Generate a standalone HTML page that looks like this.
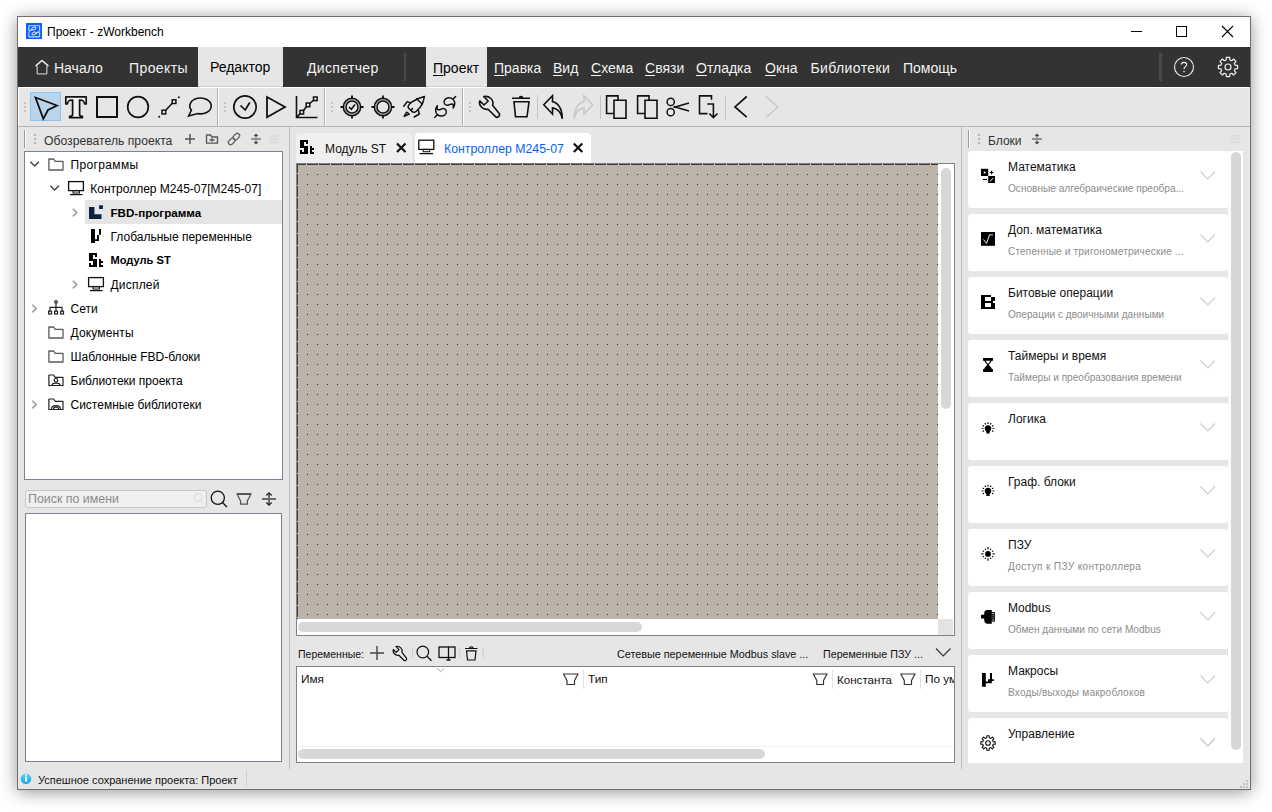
<!DOCTYPE html>
<html><head><meta charset="utf-8">
<style>
*{box-sizing:border-box;margin:0;padding:0}
html,body{width:1272px;height:812px;overflow:hidden;background:#fff;font-family:"Liberation Sans",sans-serif;}
.a{position:absolute}
.t{position:absolute;white-space:nowrap;line-height:1}
svg{position:absolute;overflow:visible}
#win{position:absolute;left:17px;top:16px;width:1234px;height:774px;border:1px solid #6f6f6f;background:#e6e6e6;box-shadow:0 2px 16px rgba(0,0,0,.42)}
.mb{color:#f2f2f2;font-size:14px}
.mb u{text-decoration:underline;text-underline-offset:2px;text-decoration-thickness:1px}
.sep{position:absolute;width:2px;background:#b0b0b0;border-right:1px solid #fff}
.card{position:absolute;left:968px;width:260px;height:57px;background:#fff;border-radius:3px}
.ct{position:absolute;left:40px;top:10px;font-size:12px;color:#111;white-space:nowrap;line-height:1}
.cs{position:absolute;left:40px;top:32.5px;font-size:10.1px;color:#8c8c8c;white-space:nowrap;line-height:1}
.chev{position:absolute;left:232px;top:20px}
.tree{font-size:12px;color:#000}
</style></head><body>
<div id="win"></div>

<!-- TITLE BAR -->
<div class="a" style="left:18px;top:17px;width:1232px;height:30px;background:#fff"></div>
<svg style="left:0;top:0" width="60" height="50">
 <rect x="26" y="23" width="16" height="16" fill="#0b5ffd"/>
 <path d="M28.8 30.2 V26.3 Q28.8 25.7 29.4 25.7 H39 Q39.6 25.7 39.6 26.3 V30.8 M39.6 32.6 V36.3 Q39.6 36.9 39 36.9 H29.4 Q28.8 36.9 28.8 36.3 V32" fill="none" stroke="#c4d8ff" stroke-width="1.1"/>
 <path d="M28.6 31.3 L32.3 29.4 M39.8 31.6 L35.9 33.2" stroke="#c4d8ff" stroke-width="1.6"/>
 <ellipse cx="33.9" cy="28.4" rx="2.1" ry="1.3" transform="rotate(-18 33.9 28.4)" fill="none" stroke="#c4d8ff" stroke-width="1.1"/>
 <ellipse cx="34" cy="33.4" rx="2.1" ry="1.3" transform="rotate(-18 34 33.4)" fill="none" stroke="#c4d8ff" stroke-width="1.1"/>
</svg>
<div class="t" style="left:47px;top:26px;font-size:12px;color:#000">Проект - zWorkbench</div>
<svg style="left:1131px;top:31px" width="11" height="1"><rect width="11" height="1" fill="#000"/></svg>
<svg style="left:1176px;top:26px" width="11" height="11"><rect x=".5" y=".5" width="10" height="10" fill="none" stroke="#000"/></svg>
<svg style="left:1222px;top:26px" width="11" height="11"><path d="M0 0L11 11M11 0L0 11" stroke="#000" stroke-width="1.1"/></svg>

<!-- MENU BAR -->
<div class="a" style="left:18px;top:47px;width:1232px;height:40px;background:#333"></div>
<div class="a" style="left:198px;top:47px;width:85px;height:40px;background:#e6e6e6;border-bottom:1px solid #cfcfcf"></div>
<div class="a" style="left:426px;top:47px;width:61px;height:40px;background:#e6e6e6;border-bottom:1px solid #cfcfcf"></div>
<svg style="left:0;top:0" width="60" height="90"><path d="M37.2 73.8 V66.4 L35.8 65.7 L42 60.5 L48.2 65.7 L46.8 66.4 V73.8 Z" fill="none" stroke="#b8b8b8" stroke-width="1.3" stroke-linejoin="round"/><path d="M35.8 65.7 L42 60.5 L48.2 65.7" fill="none" stroke="#e6e6e6" stroke-width="1.3" stroke-linejoin="round"/></svg>
<div class="t mb" style="left:54px;top:61px">Начало</div>
<div class="t mb" style="left:129px;top:61px;letter-spacing:.4px">Проекты</div>
<div class="t mb" style="left:210px;top:60px;color:#000">Редактор</div>
<div class="t mb" style="left:307px;top:61px;letter-spacing:.35px">Диспетчер</div>
<div class="a" style="left:404px;top:53px;width:2px;height:28px;background:#4b4b4b"></div>
<div class="t mb" style="left:433px;top:61px;color:#000"><u>П</u>роект</div>
<div class="t mb" style="left:494px;top:61px"><u>П</u>равка</div>
<div class="t mb" style="left:553px;top:61px"><u>В</u>ид</div>
<div class="t mb" style="left:591px;top:61px"><u>С</u>хема</div>
<div class="t mb" style="left:645px;top:61px"><u>С</u>вязи</div>
<div class="t mb" style="left:696px;top:61px"><u>О</u>тладка</div>
<div class="t mb" style="left:765px;top:61px"><u>О</u>кна</div>
<div class="t mb" style="left:810.5px;top:61px;letter-spacing:.38px">Библиотеки</div>
<div class="t mb" style="left:903px;top:61px">Помощь</div>
<div class="a" style="left:1159px;top:53px;width:3px;height:28px;background:#4a4a4a"></div>
<svg style="left:1174px;top:57px" width="20" height="20" viewBox="0 0 20 20"><circle cx="10" cy="10" r="9.5" fill="none" stroke="#f0f0f0" stroke-width="1.1"/><path d="M7.3 7.6 C7.3 4.6 12.7 4.6 12.7 7.6 C12.7 9.6 10 9.8 10 12" fill="none" stroke="#f0f0f0" stroke-width="1.1"/><circle cx="10" cy="14.6" r=".8" fill="#f0f0f0"/></svg>
<svg style="left:0;top:0" width="1272" height="90"><path d="M1226.29 57.45 L1229.71 57.45 L1229.84 59.94 L1231.69 60.70 L1233.55 59.04 L1235.96 61.45 L1234.30 63.31 L1235.06 65.16 L1237.55 65.29 L1237.55 68.71 L1235.06 68.84 L1234.30 70.69 L1235.96 72.55 L1233.55 74.96 L1231.69 73.30 L1229.84 74.06 L1229.71 76.55 L1226.29 76.55 L1226.16 74.06 L1224.31 73.30 L1222.45 74.96 L1220.04 72.55 L1221.70 70.69 L1220.94 68.84 L1218.45 68.71 L1218.45 65.29 L1220.94 65.16 L1221.70 63.31 L1220.04 61.45 L1222.45 59.04 L1224.31 60.70 L1226.16 59.94 Z" fill="none" stroke="#f0f0f0" stroke-width="1.2" stroke-linejoin="round"/><circle cx="1228" cy="67" r="3" fill="none" stroke="#f0f0f0" stroke-width="1.2"/></svg>

<!-- TOOLBAR -->
<div class="a" style="left:18px;top:87px;width:1232px;height:1px;background:#fff"></div><div class="a" style="left:18px;top:87px;width:1px;height:39px;background:#fff"></div>
<div class="a" style="left:18px;top:126px;width:1232px;height:1px;background:#b4b4b4"></div>


<!-- TOOLBAR ICONS -->
<div class="a" style="left:30px;top:92px;width:31px;height:29px;background:#bad4ea;border:1px solid #8fc2ee"></div>
<div class="sep" style="left:217px;top:88px;height:38px"></div>
<div class="sep" style="left:324px;top:88px;height:38px"></div>
<div class="sep" style="left:462px;top:88px;height:38px"></div>
<div class="a" style="left:537px;top:95px;width:1px;height:24px;background:#c4c4c4"></div>
<div class="a" style="left:600px;top:95px;width:1px;height:24px;background:#c4c4c4"></div>
<div class="a" style="left:725px;top:95px;width:1px;height:24px;background:#c4c4c4"></div>
<svg style="left:0;top:0" width="1272" height="130" fill="none" stroke="#111" stroke-width="2" stroke-linejoin="miter">
 <g fill="#c4c4c4" stroke="none">
  <rect x="24" y="102" width="2" height="2"/><rect x="24" y="106" width="2" height="2"/><rect x="24" y="110" width="2" height="2"/>
  <rect x="224" y="102" width="2" height="2"/><rect x="224" y="106" width="2" height="2"/><rect x="224" y="110" width="2" height="2"/>
  <rect x="331" y="102" width="2" height="2"/><rect x="331" y="106" width="2" height="2"/><rect x="331" y="110" width="2" height="2"/>
  <rect x="469" y="102" width="2" height="2"/><rect x="469" y="106" width="2" height="2"/><rect x="469" y="110" width="2" height="2"/>
 </g>
 <path d="M35.5 97.5 L57 105.5 L48 110 L43.3 118.8 Z" stroke-width="1.8"/>
 <path d="M65.8 96.8 H86.2 V104 H84.6 C84.2 101.2 83 100 80.2 100 H79.6 V114.8 C79.6 115.8 80.2 116.3 82.4 116.3 V117.6 H69.6 V116.3 C71.8 116.3 72.6 115.8 72.6 114.8 V100 H71.8 C69 100 67.8 101.2 67.4 104 H65.8 Z" fill="#f2f2f2" stroke-width="1.7" stroke-linejoin="round"/>
 <rect x="97" y="97" width="20" height="20"/>
 <circle cx="138" cy="107" r="10.3" stroke-width="1.7"/>
 <path d="M165.5 110.5 L172.5 103" stroke-width="1.5"/>
 <rect x="162" y="110.2" width="3.7" height="3.7" stroke-width="1.5" fill="#f2f2f2"/>
 <rect x="172.2" y="99.8" width="3.7" height="3.7" stroke-width="1.5" fill="#f2f2f2"/>
 <circle cx="159.2" cy="116.8" r="1" fill="#111" stroke="none"/><circle cx="178.8" cy="97.2" r="1" fill="#111" stroke="none"/>
 <path d="M191.4 110.1 A10.7 7.95 0 1 1 197.7 113.6 L188.6 116 Z" stroke-width="1.6" stroke-linejoin="miter"/>
 <circle cx="245" cy="107" r="11.2" stroke-width="1.7"/>
 <path d="M240.5 105.5 L245.2 110 L249.8 102.5" stroke-width="1.7"/>
 <path d="M267 97 L285 107 L267 117.3 Z" stroke-width="1.8"/>
 <path d="M296.5 96 V117.5 H317.5 M296.5 117.5 L300.3 113.6" stroke-width="1.6"/>
 <path d="M303.5 110.5 L306.5 106.5 M309.8 103.5 L313.5 100.2" stroke-width="1.5"/>
 <rect x="300" y="110.4" width="3.6" height="3.6" stroke-width="1.5" fill="#f2f2f2"/><rect x="306.2" y="103.1" width="3.6" height="3.6" stroke-width="1.5" fill="#f2f2f2"/><rect x="313.5" y="97" width="3.6" height="3.6" stroke-width="1.5" fill="#f2f2f2"/>
 <g stroke-width="1.5">
  <circle cx="352" cy="107" r="8.6" stroke-width="1.6"/><circle cx="352" cy="107" r="7.3" stroke="#888" stroke-width="0.9"/><circle cx="352" cy="107" r="6" stroke-width="1.5"/>
  <path d="M352 95.5 V98.5 M352 115.5 V118.5 M340.5 107 H343.5 M360.5 107 H363.5" stroke-width="1.8"/>
  <path d="M349 107 L351.3 109.2 L355 104.5" stroke-width="1.6"/>
  <circle cx="383" cy="107" r="8.6" stroke-width="1.6"/><circle cx="383" cy="107" r="7.3" stroke="#888" stroke-width="0.9"/><circle cx="383" cy="107" r="6" stroke-width="1.5"/>
  <path d="M383 95.5 V98.5 M383 115.5 V118.5 M371.5 107 H374.5 M391.5 107 H394.5" stroke-width="1.8"/>
 </g>
 <g stroke-width="1.5" stroke-linecap="round" stroke-linejoin="round">
  <path d="M424.4 96.4 C420 97.5 416 99 412 101.8 C409 104 407.5 106 408.3 107.8 L411.5 111 C412.7 112.3 414.5 112.7 416 111.5 C419 109 421.5 106 422.4 103.6 C423.5 101 424 98.5 424.4 96.4 Z"/>
  <path d="M416.6 98.8 L422.2 104 M410.2 102.6 L407.2 101.6 L403.8 106.3 M418.5 110.6 L419.3 114 L414.2 117 M411.3 110 L412.5 108.5 M404.2 116.4 L406.6 112.2 L409.3 114 Z"/>
 </g>
 <g stroke-width="1.5" stroke-linecap="round" stroke-linejoin="round">
  <path id="sw" d="M437.3 105.8 C435.2 108.5 435 112.5 437.5 114.6 C440 116.8 444.5 116.5 446 113.5 C447.3 110.5 445 108 442.5 108.6 C440.5 109.2 438.8 110.5 437.5 109.5 C436.8 108.5 437 107 437.3 105.8 Z M437.5 114.6 L434.8 117.3"/>
  <path transform="rotate(180 445.2 106.9)" d="M437.3 105.8 C435.2 108.5 435 112.5 437.5 114.6 C440 116.8 444.5 116.5 446 113.5 C447.3 110.5 445 108 442.5 108.6 C440.5 109.2 438.8 110.5 437.5 109.5 C436.8 108.5 437 107 437.3 105.8 Z M437.5 114.6 L434.8 117.3"/>
 </g>
 <path id="wr" d="M483.8 96.6 L488.2 101 L484 105 L479.8 100.9 C478.3 105.2 482.8 110.2 488 109.3 L495.5 116.6 C497.3 118.4 500.6 116 499.2 113.5 L492.6 105.2 C494.3 100 489.3 95.4 483.8 96.6 Z" stroke-width="1.6" stroke-linejoin="round"/>
 <path d="M512 98.3 H530 M514 101.8 H529 L527 116.8 H515.5 Z M519.5 98 C519.5 96 522.5 96 522.5 98" stroke-width="1.6"/>
 <path d="M562.3 118.8 C562.3 108 557.5 102.5 552.5 101.6 V95.8 L543.8 104.8 L552.5 114 V107.9 C557 108.5 561 112 562.3 118.8 Z" stroke-width="1.6" stroke-linejoin="miter"/>
 <path d="M574.2 118.8 C574.2 108 579 102.5 584 101.6 V95.8 L592.7 104.8 L584 114 V107.9 C579.5 108.5 575.5 112 574.2 118.8 Z" stroke="#c8c8c8" stroke-width="1.6" stroke-linejoin="miter"/>
 <path d="M614 113.5 H606.6 V95.9 H618 V100.2 M614 100.2 H626 V118.2 H614 Z" stroke-width="1.6"/>
 <path d="M645 113.5 H637.6 V95.9 H649 V100.2 M645 100.2 H657 V118.2 H645 Z" stroke-width="1.6"/>
 <circle cx="670.7" cy="101.9" r="3.6" stroke-width="1.5"/><circle cx="670.7" cy="112.2" r="3.6" stroke-width="1.5"/>
 <path d="M673.5 107.5 L689 103 M673.5 106.5 L689 111" stroke-width="1.5"/>
 <path d="M707.5 113.6 H699.5 V95.9 H711.5 V99.8" stroke-width="1.6"/>
 <path d="M707.2 104 H713.4 V117.5 M709.3 113.5 L713.4 117.6 L717.5 113.5" stroke-width="1.6"/>
 <path d="M746.7 96.5 L735 106.9 L746.7 117.2" stroke-width="1.7"/>
 <path d="M766.2 96.5 L778 106.9 L766.2 117.2" stroke="#c6c6c6" stroke-width="1.3"/>
</svg>

<!-- MAIN -->
<div class="a" style="left:289px;top:127px;width:1px;height:642px;background:#bdbdbd"></div>
<div class="a" style="left:961px;top:127px;width:1px;height:642px;background:#bdbdbd"></div>

<!-- LEFT PANEL -->
<div class="a" style="left:24px;top:130px;width:1px;height:18px;background:#9a9a9a;border-right:0"></div><div class="a" style="left:25px;top:130px;width:1px;height:18px;background:#fff"></div>
<div class="t" style="left:44px;top:135px;font-size:12.2px;color:#333">Обозреватель проекта</div>
<div class="a" style="left:24px;top:151px;width:259px;height:329px;background:#fff;border:1px solid #7b8390"></div>
<div class="a" style="left:85px;top:200px;width:197px;height:24px;background:#e5e5e5"></div>

<div class="a" style="left:25px;top:490px;width:182px;height:18px;background:#f0f0f0;border:1px solid #c6c6c6;border-radius:3px"></div>
<div class="t" style="left:28px;top:493px;font-size:12.4px;color:#8a8a8a">Поиск по имени</div>
<div class="a" style="left:25px;top:513px;width:257px;height:249px;background:#fff;border:1px solid #7b8390"></div>


<!-- LEFT PANEL ICONS / TREE -->
<svg style="left:0;top:0" width="300" height="520" fill="none" stroke="#555" stroke-width="1.4">
 <g fill="#b4b4b4" stroke="none"><rect x="34" y="134" width="2" height="2"/><rect x="34" y="138" width="2" height="2"/><rect x="34" y="142" width="2" height="2"/></g>
 <path d="M185 139 H195 M190 134 V144" stroke-width="1.5"/>
 <path d="M206.5 143.2 V135 H210.5 L212 137 H217.5 V143.2 Z M209.5 140 H214.5 M212 138.2 L212 141.5" stroke-width="1.3" stroke-linejoin="round"/>
 <g transform="rotate(-45 234 139)" stroke="#666" stroke-width="1.3"><rect x="227" y="136.7" width="7.4" height="4.6" rx="2.3"/><rect x="233.6" y="136.7" width="7.4" height="4.6" rx="2.3"/></g>
 <path d="M251 139 H261" stroke="#888" stroke-width="1.8"/>
 <path d="M256 135.5 V142.5" stroke="#888" stroke-width="1.2"/>
 <path d="M254 135.8 L256 133.9 L258 135.8 Z M254 142.2 L256 144.1 L258 142.2 Z" fill="#444" stroke="#444" stroke-width="0.8" stroke-linejoin="round"/>
 <path d="M269.5 136 H278.5 M269.5 139 H278.5 M269.5 142 H278.5" stroke="#d2d2d2" stroke-width="1.2"/>

 <!-- tree chevrons -->
 <path d="M30.3 161.7 L34.6 166 L38.9 161.7" stroke="#444" stroke-width="1.5"/>
 <path d="M50.3 185.7 L54.6 190 L58.9 185.7" stroke="#444" stroke-width="1.5"/>
 <path d="M72.8 208.8 L76.8 212.6 L72.8 216.4" stroke="#9c9c9c" stroke-width="1.5"/>
 <path d="M72.8 280.8 L76.8 284.6 L72.8 288.4" stroke="#9c9c9c" stroke-width="1.5"/>
 <path d="M32.3 304.8 L36.3 308.6 L32.3 312.4" stroke="#9c9c9c" stroke-width="1.5"/>
 <path d="M32.3 400.8 L36.3 404.6 L32.3 408.4" stroke="#9c9c9c" stroke-width="1.5"/>

 <!-- folders -->
 <g stroke="#5a5a5a" stroke-width="1.3" stroke-linejoin="round">
  <path d="M48.9 170 V159 H53.5 L55.3 161.3 H63 V170 Z"/>
  <path d="M48.9 338 V327 H53.5 L55.3 329.3 H63 V338 Z"/>
  <path d="M48.9 362 V351 H53.5 L55.3 353.3 H63 V362 Z"/>
 </g>
 <g stroke="#222" stroke-width="1.2" stroke-linejoin="round">
  <path d="M48.9 385.5 V375 H53.5 L55.3 377.3 H63 V385.5 Z"/>
  <circle cx="56" cy="380.3" r="1.8"/><path d="M52 385 C52.5 382.5 59.5 382.5 60 385"/>
  <path d="M48.9 409.5 V399 H53.5 L55.3 401.3 H63 V409.5 Z"/>
  <path d="M51.5 409 C51.5 404.5 60.5 404.5 60.5 409 M53.5 409 C53.5 406.5 58.5 406.5 58.5 409"/>
 </g>
 <!-- network -->
 <g stroke="#222" stroke-width="1.2">
  <circle cx="56" cy="301.8" r="1.3"/><path d="M56 303 V307.3 M50 311 V307.3 H62 V311 M56 307.3 V311"/>
  <rect x="48.6" y="311.2" width="2.9" height="2.8"/><rect x="54.6" y="311.2" width="2.9" height="2.8"/><rect x="60.6" y="311.2" width="2.9" height="2.8"/>
 </g>
 <!-- monitors -->
 <g stroke="#111" stroke-width="1.3">
  <rect x="68.6" y="181.6" width="14.8" height="9"/><rect x="73" y="190.8" width="6.5" height="2.2" stroke-width="1"/><path d="M70 194.6 H82.5"/>
  <rect x="88.6" y="277.6" width="14.8" height="9"/><rect x="93" y="286.8" width="6.5" height="2.2" stroke-width="1"/><path d="M90 290.6 H102.5"/>
 </g>
 <!-- FBD icon -->
 <path d="M89 207 H94.4 V214.2 H101.5 V219 H89 Z M99.1 205.3 H102.9 V208.9 H99.1 Z" fill="#0b2340" stroke="none"/>
 <!-- global vars icon -->
 <path d="M91 229 H95 V239.3 H97 V235.1 H99 V229 H101 V234.8 H99 V241 H95 V243 H91 Z" fill="#000" stroke="none"/>
 <!-- ST icon -->
 <path d="M89 253 H97 V267 H89 Z M93 257 H97 V259 H93 Z M93 255 H95 V257 H93 Z M89 261 H93 V263 H89 Z M91 263 H93 V265 H91 Z" fill="#000" stroke="none" fill-rule="evenodd"/><path d="M99 259 H101 V261 H103 V263 H101 V265 H103 V267 H99 Z" fill="#000" stroke="none"/>

 <!-- search row -->
 <circle cx="198" cy="497.5" r="4" stroke="#dadada" stroke-width="1"/><path d="M201 500.5 L203.5 503" stroke="#dadada" stroke-width="1"/>
 <circle cx="217.8" cy="497.8" r="6.6" stroke="#111" stroke-width="1.3"/><path d="M222.5 502.5 L226.9 506.9" stroke="#111" stroke-width="1.4"/>
 <path d="M237 494 H251 L247.3 501 V504.2 H240.6 V501 Z" stroke="#555" stroke-width="1.3" stroke-linejoin="round"/><path d="M237 494 H251" stroke="#555" stroke-width="2"/>
 <path d="M262 499 H276" stroke="#5c5c5c" stroke-width="1.8"/>
 <path d="M269 493.5 V504.5" stroke="#6a6a6a" stroke-width="2"/><path d="M266.3 495.5 L269 492.8 L271.7 495.5 M266.3 502.5 L269 505.2 L271.7 502.5" stroke="#222" stroke-width="1.3"/>
</svg>
<div class="t tree" style="left:70.5px;top:159px;letter-spacing:.35px">Программы</div>
<div class="t tree" style="left:90.3px;top:183px">Контроллер M245-07[M245-07]</div>
<div class="t tree" style="left:110.5px;top:207px;font-weight:bold;font-size:11.6px">FBD-программа</div>
<div class="t tree" style="left:110.5px;top:231px">Глобальные переменные</div>
<div class="t tree" style="left:110.5px;top:255px;font-weight:bold;font-size:11.1px">Модуль ST</div>
<div class="t tree" style="left:110.5px;top:279px;letter-spacing:.2px">Дисплей</div>
<div class="t tree" style="left:70.5px;top:303px">Сети</div>
<div class="t tree" style="left:70.5px;top:327px;letter-spacing:.15px">Документы</div>
<div class="t tree" style="left:70.5px;top:351px">Шаблонные FBD-блоки</div>
<div class="t tree" style="left:70.5px;top:375px">Библиотеки проекта</div>
<div class="t tree" style="left:70.5px;top:399px">Системные библиотеки</div>

<!-- CENTER -->
<div class="a" style="left:296px;top:133px;width:116px;height:30px;background:#efefef;border-radius:4px 4px 0 0"></div>
<div class="a" style="left:415px;top:133px;width:176px;height:30px;background:#fff;border-radius:4px 4px 0 0"></div>
<div class="t" style="left:325px;top:143px;font-size:12px;color:#111">Модуль ST</div>
<div class="t" style="left:444px;top:143px;font-size:12.3px;color:#0a62f5">Контроллер M245-07</div>

<div class="a" style="left:296px;top:163px;width:659px;height:473px;background:#fff;border:1px solid #7b8390"></div>
<div class="a" id="canvas" style="left:297px;top:164px;width:641px;height:455px;background-color:#bcb4a9"></div>
<svg style="left:297px;top:164px;overflow:hidden" width="641" height="455">
 <defs><pattern id="dots" x="0" y="0" width="10" height="10" patternUnits="userSpaceOnUse"><rect x="0" y="0" width="1" height="1" fill="#3c2c1f"/></pattern></defs>
 <rect x="0" y="0" width="641" height="454" fill="url(#dots)" transform="translate(10 10)"/>
 <path d="M0 0.5 H641 M0.5 0 V455" stroke="#e2ddd6" stroke-width="1"/>
 <path d="M0 0.5 H641" stroke="#4a3a2c" stroke-width="1" stroke-dasharray="11 1" stroke-dashoffset="2"/>
 <path d="M0.5 0 V455" stroke="#4a3a2c" stroke-width="1" stroke-dasharray="11 1" stroke-dashoffset="2"/>
</svg>
<div class="a" style="left:941px;top:168px;width:10px;height:241px;background:#d8d8d8;border-radius:5px"></div>
<div class="a" style="left:298px;top:622px;width:344px;height:10px;background:#d8d8d8;border-radius:5px"></div>
<div class="a" style="left:938px;top:619px;width:15px;height:16px;background:#e3e3e3"></div>

<div class="t" style="left:298px;top:649px;font-size:10.5px;color:#111">Переменные:</div>
<div class="t" style="left:617px;top:649px;font-size:10.8px;color:#111">Сетевые переменные Modbus slave ...</div>
<div class="t" style="left:823px;top:649px;font-size:10.7px;color:#111">Переменные ПЗУ ...</div>
<div class="a" style="left:296px;top:666px;width:659px;height:97px;background:#fff;border:1px solid #7b8390"></div>
<div class="t" style="left:301px;top:674px;font-size:11.8px;color:#111">Имя</div>
<div class="t" style="left:588px;top:674px;font-size:11.8px;color:#111">Тип</div>
<div class="t" style="left:837px;top:674px;font-size:11.6px;color:#111">Константа</div>
<div class="t" style="left:925px;top:674px;font-size:11.8px;color:#111;width:29px;overflow:hidden">По умолчанию</div>
<div class="a" style="left:583px;top:670px;width:1px;height:19px;background:#e3e3e3"></div>
<div class="a" style="left:832px;top:670px;width:1px;height:19px;background:#e3e3e3"></div>
<div class="a" style="left:920px;top:670px;width:1px;height:19px;background:#e3e3e3"></div>
<div class="a" style="left:297px;top:746px;width:657px;height:1px;background:#f0f0f0"></div>
<div class="a" style="left:298px;top:749px;width:467px;height:10px;background:#d8d8d8;border-radius:5px"></div>

<!-- RIGHT PANEL -->
<div class="a" style="left:968px;top:130px;width:1px;height:18px;background:#9a9a9a"></div><div class="a" style="left:969px;top:130px;width:1px;height:18px;background:#fff"></div>
<div class="t" style="left:988px;top:135px;font-size:12px;color:#333">Блоки</div>
<div class="a" style="left:1228px;top:151px;width:15px;height:612px;background:#fff"></div>
<div class="a" style="left:1231px;top:152px;width:10px;height:598px;background:#d6d6d6;border-radius:5px"></div>
<div class="a" style="left:962px;top:151px;width:281px;height:612px;overflow:hidden">
<div class="card" style="left:6px;top:0px"><div class="ct">Математика</div><div class="cs">Основные алгебраические преобра...</div></div>
<div class="card" style="left:6px;top:63px"><div class="ct">Доп. математика</div><div class="cs" style="letter-spacing:.15px">Степенные и тригонометрические ...</div></div>
<div class="card" style="left:6px;top:126px"><div class="ct">Битовые операции</div><div class="cs">Операции с двоичными данными</div></div>
<div class="card" style="left:6px;top:189px"><div class="ct">Таймеры и время</div><div class="cs">Таймеры и преобразования времени</div></div>
<div class="card" style="left:6px;top:252px"><div class="ct">Логика</div></div>
<div class="card" style="left:6px;top:315px"><div class="ct">Граф. блоки</div></div>
<div class="card" style="left:6px;top:378px"><div class="ct">ПЗУ</div><div class="cs" style="letter-spacing:.33px">Доступ к ПЗУ контроллера</div></div>
<div class="card" style="left:6px;top:441px"><div class="ct">Modbus</div><div class="cs">Обмен данными по сети Modbus</div></div>
<div class="card" style="left:6px;top:504px"><div class="ct">Макросы</div><div class="cs" style="letter-spacing:.19px">Входы/выходы макроблоков</div></div>
<div class="card" style="left:6px;top:567px"><div class="ct">Управление</div></div>
</div>
<svg style="left:0;top:0" width="1272" height="812" fill="#000" stroke="none">
<g fill="#d0d0d0"><rect x="1032" y="0" width="0" height="0"/></g>
<path d="M1200.5 171.5 L1207.8 179 L1215 171.5" fill="none" stroke="#cdcdcd" stroke-width="1.1"/>
<path d="M1200.5 234.5 L1207.8 242 L1215 234.5" fill="none" stroke="#cdcdcd" stroke-width="1.1"/>
<path d="M1200.5 297.5 L1207.8 305 L1215 297.5" fill="none" stroke="#cdcdcd" stroke-width="1.1"/>
<path d="M1200.5 360.5 L1207.8 368 L1215 360.5" fill="none" stroke="#cdcdcd" stroke-width="1.1"/>
<path d="M1200.5 423.5 L1207.8 431 L1215 423.5" fill="none" stroke="#cdcdcd" stroke-width="1.1"/>
<path d="M1200.5 486.5 L1207.8 494 L1215 486.5" fill="none" stroke="#cdcdcd" stroke-width="1.1"/>
<path d="M1200.5 549.5 L1207.8 557 L1215 549.5" fill="none" stroke="#cdcdcd" stroke-width="1.1"/>
<path d="M1200.5 612.5 L1207.8 620 L1215 612.5" fill="none" stroke="#cdcdcd" stroke-width="1.1"/>
<path d="M1200.5 675.5 L1207.8 683 L1215 675.5" fill="none" stroke="#cdcdcd" stroke-width="1.1"/>
<path d="M1200.5 738.5 L1207.8 746 L1215 738.5" fill="none" stroke="#cdcdcd" stroke-width="1.1"/>
<path d="M1200.5 738.5 L1207.8 746 L1215 738.5" fill="none" stroke="#cdcdcd" stroke-width="1.1"/>
<rect x="981" y="168.8" width="7.2" height="7.2"/><rect x="988.2" y="176" width="6.8" height="7"/><circle cx="984.6" cy="172.4" r="1" fill="#fff"/><path d="M990 181.5 L993 178.2" stroke="#fff" stroke-width="1"/><path d="M989.9 172.5 H993.3 M991.6 170.8 V174.2" stroke="#000" stroke-width="1.1"/><path d="M983 179.5 H987" stroke="#000" stroke-width="1.1"/>
<rect x="981" y="232" width="14" height="13.8"/><path d="M983.5 239.5 L986.5 243.5 L989.5 234.8 H993" fill="none" stroke="#fff" stroke-width="0.9"/>
<path d="M981 295 H991 V297 H995 V301 H993 V303 H995 V309 H981 Z M985 297 V301 H991 V297 Z M985 303 V307 H991 V303 Z" fill-rule="evenodd"/>
<path d="M983 358 H993 V360.8 H991.7 C991 362.5 989.6 364 988.7 364.8 C989.9 366 991.2 367.5 991.9 369 H993 V372 H983 V369 H984.1 C984.8 367.5 986.1 366 987.3 364.8 C986.4 364 985 362.5 984.3 360.8 H983 Z M985.7 360.8 C986.3 362.2 987.2 363.3 988 364 C988.8 363.3 989.7 362.2 990.3 360.8 Z" fill-rule="evenodd"/>
<path d="M988 425.2 C990.2 425.2 991.3 426.8 991.3 428.5 C991.3 430.1 990 430.9 989.6 432.0 V433.5 H986.4 V432.0 C986 430.9 984.7 430.1 984.7 428.5 C984.7 426.8 985.8 425.2 988 425.2 Z"/>
<path d="M988.00 423.90 L988.00 422.30 M990.30 424.52 L991.10 423.13 M985.70 424.52 L984.90 423.13 M991.98 426.20 L993.37 425.40 M984.02 426.20 L982.63 425.40 M992.60 428.50 L994.20 428.50 M983.40 428.50 L981.80 428.50 M991.98 430.80 L993.37 431.60 M984.02 430.80 L982.63 431.60" stroke="#000" stroke-width="1.2"/>
<path d="M988 487.7 C990.2 487.7 991.3 489.3 991.3 491 C991.3 492.6 990 493.4 989.6 494.5 V496 H986.4 V494.5 C986 493.4 984.7 492.6 984.7 491 C984.7 489.3 985.8 487.7 988 487.7 Z"/>
<path d="M988.00 486.40 L988.00 484.80 M990.30 487.02 L991.10 485.63 M985.70 487.02 L984.90 485.63 M991.98 488.70 L993.37 487.90 M984.02 488.70 L982.63 487.90 M992.60 491.00 L994.20 491.00 M983.40 491.00 L981.80 491.00 M991.98 493.30 L993.37 494.10 M984.02 493.30 L982.63 494.10" stroke="#000" stroke-width="1.2"/>
<circle cx="988" cy="553.9" r="2.9"/><path d="M992.40 553.90 L994.90 553.90 M988.00 558.30 L988.00 560.80 M983.60 553.90 L981.10 553.90 M988.00 549.50 L988.00 547.00" stroke="#333" stroke-width="1.4"/><path d="M991.98 556.20 L993.20 556.90 M990.30 557.88 L991.00 559.10 M985.70 557.88 L985.00 559.10 M984.02 556.20 L982.80 556.90 M984.02 551.60 L982.80 550.90 M985.70 549.92 L985.00 548.70 M990.30 549.92 L991.00 548.70 M991.98 551.60 L993.20 550.90" stroke="#000" stroke-width="1.1"/>
<path d="M987 610 H991.8 V623.7 H987 C985.3 623.7 984.2 622 984.2 619.8 V618.6 H981 V614.8 H984.2 V613.8 C984.2 611.7 985.3 610 987 610 Z"/><rect x="991.5" y="612" width="3.4" height="9.7"/><path d="M992.2 613.6 H994.1 M992.2 620.1 H994.1" stroke="#fff" stroke-width="0.9"/><path d="M992.2 615.8 H994.1 M992.2 617.9 H994.1" stroke="#999" stroke-width="0.9"/>
<path d="M982 673.1 H985.8 V681.5 H988 V679.2 H990 V673.1 H992 V679.2 H993.9 V681 H991.8 V683.2 H985.8 V686.7 H982 Z"/>
<path d="M986.86 735.79 L989.14 735.79 L989.26 737.75 L990.82 738.40 L992.29 737.09 L993.91 738.71 L992.60 740.18 L993.25 741.74 L995.21 741.86 L995.21 744.14 L993.25 744.26 L992.60 745.82 L993.91 747.29 L992.29 748.91 L990.82 747.60 L989.26 748.25 L989.14 750.21 L986.86 750.21 L986.74 748.25 L985.18 747.60 L983.71 748.91 L982.09 747.29 L983.40 745.82 L982.75 744.26 L980.79 744.14 L980.79 741.86 L982.75 741.74 L983.40 740.18 L982.09 738.71 L983.71 737.09 L985.18 738.40 L986.74 737.75 Z" fill="none" stroke="#111" stroke-width="1.1" stroke-linejoin="round"/><circle cx="988" cy="743" r="2.3" fill="none" stroke="#111" stroke-width="1.1"/>
</svg>


<!-- MISC ICONS -->
<svg style="left:0;top:0" width="1272" height="812" fill="none" stroke="#111" stroke-width="1.4">
 <g fill="#b4b4b4" stroke="none"><rect x="978" y="134" width="2" height="2"/><rect x="978" y="138" width="2" height="2"/><rect x="978" y="142" width="2" height="2"/></g>
 <path d="M1032 139 H1042" stroke="#888" stroke-width="1.8"/>
 <path d="M1037 135.5 V142.5" stroke="#888" stroke-width="1.2"/>
 <path d="M1035 135.8 L1037 133.9 L1039 135.8 Z M1035 142.2 L1037 144.1 L1039 142.2 Z" fill="#444" stroke="#444" stroke-width="0.8" stroke-linejoin="round"/>
 <path d="M1230.5 136 H1240.5 M1230.5 139 H1240.5 M1230.5 142 H1240.5" stroke="#d2d2d2" stroke-width="1.2"/>
 <!-- tab icons -->
 <path d="M300 140 H308 V154 H300 Z M304 144 H308 V146 H304 Z M304 142 H306 V144 H304 Z M300 148 H304 V150 H300 Z M302 150 H304 V152 H302 Z" fill="#000" stroke="none" fill-rule="evenodd"/><path d="M310 146 H312 V148 H314 V150 H312 V152 H314 V154 H310 Z" fill="#000" stroke="none"/>
 <path d="M397 143.5 L405.5 152 M405.5 143.5 L397 152" stroke="#111" stroke-width="2.2"/>
 <rect x="418.8" y="140.2" width="15" height="9.2" stroke-width="1.3"/><rect x="423.2" y="149.4" width="6.5" height="2.3" stroke-width="1"/><path d="M419.5 153.6 H433" stroke-width="1.3"/>
 <path d="M573.8 143.5 L582.3 152 M582.3 143.5 L573.8 152" stroke="#111" stroke-width="2.2"/>
 <!-- variables toolbar -->
 <path d="M370 653 H384 M377 646 V660" stroke="#444" stroke-width="1.4"/>
 <path transform="translate(392.4 646) scale(0.68) translate(-478.5 -95.7)" d="M483.8 96.6 L488.2 101 L484 105 L479.8 100.9 C478.3 105.2 482.8 110.2 488 109.3 L495.5 116.6 C497.3 118.4 500.6 116 499.2 113.5 L492.6 105.2 C494.3 100 489.3 95.4 483.8 96.6 Z" stroke="#111" stroke-width="1.8" stroke-linejoin="round"/>
 <path d="M412.5 649 V658" stroke="#c8c8c8" stroke-width="1"/>
 <circle cx="422.8" cy="652" r="5.8" stroke="#111" stroke-width="1.2"/><path d="M427 656.3 L431.5 660.7" stroke="#111" stroke-width="1.3"/>
 <rect x="439" y="647" width="16" height="10.5" stroke="#111" stroke-width="1.3"/><path d="M448.5 646.5 V660 M446.5 660 H450.5" stroke="#111" stroke-width="1.3"/>
 <path d="M459.7 649 V658" stroke="#c8c8c8" stroke-width="1"/>
 <path d="M465 648.5 H477.5 M466.5 650.8 H476 L475 660 H467.5 Z M469.5 648.3 C469.5 646.5 473 646.5 473 648.3" stroke="#111" stroke-width="1.2"/>
 <path d="M483.2 649 V658" stroke="#c8c8c8" stroke-width="1"/>
 <path d="M936 648.5 L943.2 656 L950.5 648.5" stroke="#333" stroke-width="1.1"/>
 <!-- table header -->
 <path d="M437 668.3 L440.7 671.5 L444.4 668.3" stroke="#a8a8a8" stroke-width="1"/>
 <path d="M563.5 674 H578 L574.5 680.5 V684.5 H567 V680.5 Z" stroke="#333" stroke-width="1.2" stroke-linejoin="round"/>
 <path d="M813.3 674 H827 L823.5 680.5 V684.5 H816.8 V680.5 Z" stroke="#333" stroke-width="1.2" stroke-linejoin="round"/>
 <path d="M900.8 674 H915 L911.5 680.5 V684.5 H904.3 V680.5 Z" stroke="#333" stroke-width="1.2" stroke-linejoin="round"/>
</svg>

<!-- STATUS BAR -->
<svg style="left:0;top:0" width="1272" height="812"><g fill="#c2c2c2"><rect x="1246" y="780" width="2" height="2"/><rect x="1243" y="783" width="2" height="2"/><rect x="1246" y="783" width="2" height="2"/><rect x="1240" y="786" width="2" height="2"/><rect x="1243" y="786" width="2" height="2"/><rect x="1246" y="786" width="2" height="2"/></g></svg>

<div class="t" style="left:38px;top:775px;font-size:11px;color:#111">Успешное сохранение проекта: Проект</div>
<div class="a" style="left:246px;top:771px;width:1px;height:16px;background:#cfcfcf"></div>
<svg style="left:0;top:760px" width="40" height="30"><defs><linearGradient id="ig" x1="0" y1="0" x2="0" y2="1"><stop offset="0" stop-color="#5fd0f5"/><stop offset="1" stop-color="#12a6e0"/></linearGradient></defs><circle cx="26" cy="18.8" r="5.3" fill="url(#ig)"/><rect x="25.1" y="16.5" width="1.8" height="5.3" fill="#fff"/><rect x="25.1" y="14.3" width="1.8" height="1.5" fill="#fff"/></svg>
</body></html>
